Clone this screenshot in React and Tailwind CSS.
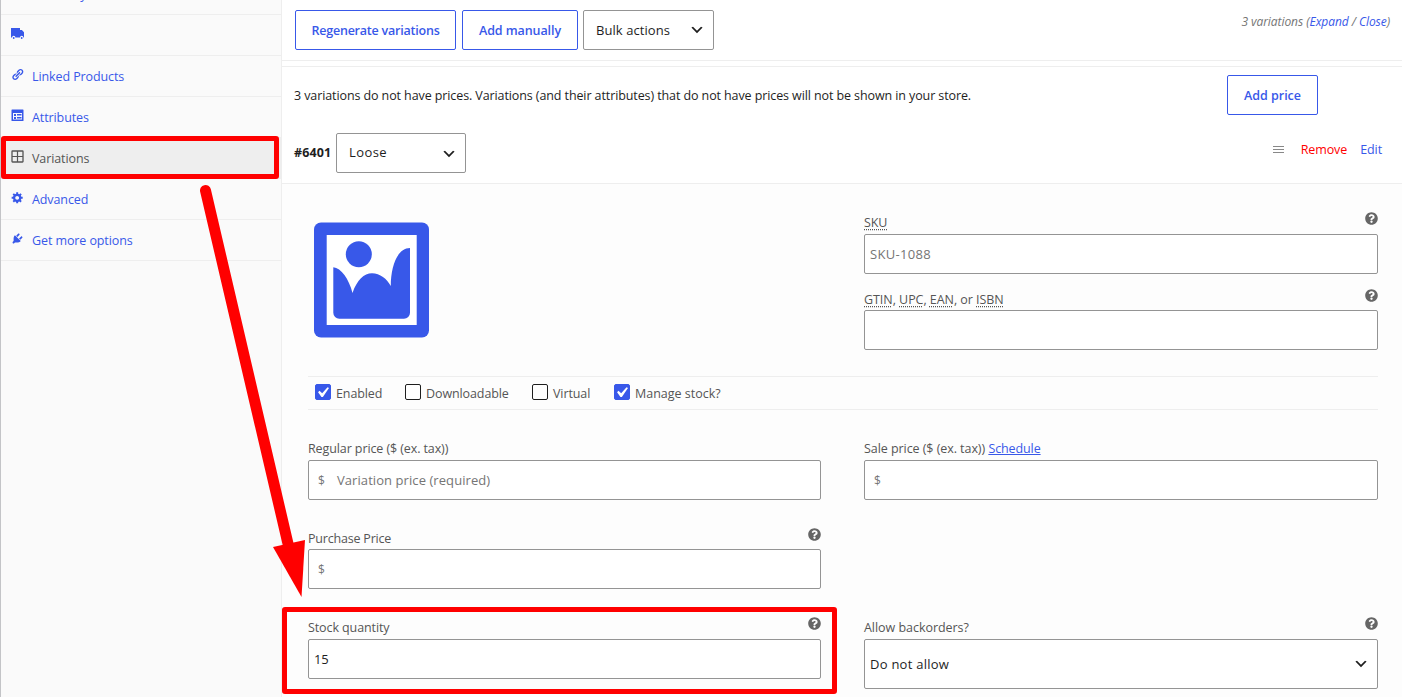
import { FaQuestionCircle } from "react-icons/fa";

const T = ({ c = "tracking-[-0.1px]", children }) => <span className={`whitespace-nowrap ${c}`}>{children}</span>;

const Glyph = ({ d, size = 13 }) => (
  <svg width={size} height={size} viewBox="0 0 20 20" fill="currentColor"><path d={d} /></svg>
);

const LINK = "M17.74 2.76c1.68 1.69 1.68 4.41 0 6.1l-1.53 1.52c-1.12 1.12-2.7 1.47-4.14 1.09l2.62-2.61.76-.77.76-.76c.84-.84.84-2.2 0-3.04-.84-.85-2.2-.85-3.04 0l-.77.76-3.38 3.38c-.37-1.44-.02-3.02 1.1-4.14l1.52-1.53c1.69-1.68 4.42-1.68 6.1 0zM8.59 13.43l5.34-5.34c.42-.42.42-1.1 0-1.52-.44-.43-1.13-.39-1.53 0l-5.33 5.34c-.42.42-.42 1.1 0 1.52.44.43 1.13.39 1.52 0zm-.76 2.29l4.14-4.15c.38 1.44.03 3.02-1.09 4.14l-1.52 1.53c-1.69 1.68-4.41 1.68-6.1 0-1.68-1.68-1.68-4.42 0-6.1l1.53-1.52c1.12-1.12 2.7-1.47 4.14-1.1l-4.14 4.15c-.85.84-.85 2.2 0 3.05.84.84 2.2.84 3.04 0z";
const GEAR = "M18 12h-2.18c-.17.7-.44 1.35-.81 1.93l1.54 1.54-2.1 2.1-1.54-1.54c-.58.36-1.23.63-1.91.79V19H8v-2.18c-.68-.16-1.33-.43-1.91-.79l-1.54 1.54-2.12-2.12 1.54-1.54c-.36-.58-.63-1.23-.79-1.91H1V9.03h2.17c.16-.7.44-1.35.8-1.94L2.43 5.55l2.1-2.1 1.54 1.54c.58-.37 1.24-.64 1.93-.81V2h3v2.18c.68.16 1.33.43 1.91.79l1.54-1.54 2.12 2.12-1.54 1.54c.36.59.64 1.24.8 1.94H18V12zm-8.5 1.5c1.66 0 3-1.34 3-3s-1.34-3-3-3-3 1.34-3 3 1.34 3 3 3z";
const PLUG = "M13.11 4.36L9.87 7.6 8 5.73l3.24-3.24c.35-.34 1.05-.2 1.56.32.52.51.66 1.21.31 1.55zm-8 1.77l.91-1.12 9.01 9.01-1.19.84c-.71.71-2.63 1.16-3.82 1.16H6.14L4.9 17.26c-.59.59-1.54.59-2.12 0-.59-.58-.59-1.53 0-2.12l1.24-1.24v-3.88c0-1.13.4-3.19 1.09-3.89zm7.26 3.97l3.24-3.24c.34-.35 1.04-.21 1.55.31.52.51.66 1.21.31 1.55l-3.24 3.25z";
const CHECK = "M14.83 4.89l1.34.94-5.81 8.38H9.02L5.78 9.67l1.34-1.25 2.57 2.4z";
const CHEVRON = "M5 6l5 5 5-5 2 1-7 7-7-7 2-1z";

const Truck = () => (
  <svg width="13" height="13" viewBox="0 0 13 13" fill="currentColor">
    <path d="M0 1h9v2h1.9L13 5.2V10.5h-0.6a1.7 1.7 0 0 0-3.4 0H4.4a1.7 1.7 0 0 0-3.4 0H0z" />
    <circle cx="2.7" cy="11" r="0.9" /><circle cx="10.7" cy="11" r="0.9" />
  </svg>
);
const Card = () => (
  <svg width="13" height="13" viewBox="0 0 13 13">
    <rect x="0.5" y="0.5" width="12" height="11.5" rx="0.6" fill="currentColor" />
    <path d="M2 4h9v6.5H2z" fill="#fafafa" />
    <path d="M3 5h2v2H3zM3 8h2v2H3zM6 5h4.5v1.4H6zM6 8h4.5v1.4H6z" fill="currentColor" />
  </svg>
);
const Grid = () => (
  <svg width="13" height="13" viewBox="0 0 13 13" fill="none" stroke="currentColor">
    <rect x="1" y="1" width="11" height="11" rx="0.5" strokeWidth="1.3" />
    <path d="M6.5 1v11M1 6.5h11" strokeWidth="1.2" />
  </svg>
);

const NavItem = ({ icon, label, active }) => (
  <div className={`flex h-[41px] shrink-0 items-center border-b border-[#eee] pl-[10px] ${active ? "bg-[#eee] text-[#555]" : "text-[#3858e9]"}`}>
    <span className="mr-[8px] flex w-[13px] pb-[4px]">{icon}</span>
    {label && <span className="pt-[2px]"><T>{label}</T></span>}
  </div>
);

const Button = ({ children, c, t }) => (
  <button className={`flex h-[40px] items-center justify-center rounded-[2px] border border-[#3858e9] bg-white pt-[2px] font-semibold text-[#3858e9] ${c}`}>
    <T c={t}>{children}</T>
  </button>
);

const Select = ({ children, c, t = "tracking-[0.07px]", arrow = "" }) => (
  <div className={`flex items-center justify-between rounded-[2px] border border-[#949494] bg-white pr-[8px] text-[13px] text-[#1e1e1e] ${c}`}>
    <T c={t}>{children}</T>
    <span className={`flex ${arrow}`}><Glyph d={CHEVRON} size={16} /></span>
  </div>
);

const Field = ({ label, help, gap = "pt-[27px]", h = "h-[23px]", children }) => (
  <div className={gap}>
    <div className={`flex items-center justify-between ${h}`}>
      <div>{label}</div>
      {help && <FaQuestionCircle className="-mt-[8px] text-[#666]" size={13} />}
    </div>
    {children}
  </div>
);

const Box = ({ children, c = "text-[#757575]" }) => (
  <div className={`flex h-[40px] items-center rounded-[2px] border border-[#949494] bg-white ${c}`}>{children}</div>
);

const Check = ({ on, label, c = "", t }) => (
  <label className={`flex h-[32px] items-start pt-[7px] ${c}`}>
    <span className={`mr-[5px] flex size-[16px] items-center justify-center rounded-[2px] border ${on ? "border-[#3858e9] bg-[#3858e9] text-white" : "border-[#1e1e1e] bg-white"}`}>
      {on && <span className="-m-[3px] flex shrink-0 pr-[2px]"><Glyph d={CHECK} size={21} /></span>}
    </span>
    <span className="pt-[1px]"><T c={t}>{label}</T></span>
  </label>
);

const Abbr = ({ children }) => <abbr className="underline decoration-dotted underline-offset-2">{children}</abbr>;
const Dollar = ({ c = "" }) => <span className={`pt-[1px] text-[12px] ${c}`}>$</span>;

const Placeholder = () => (
  <svg width="115" height="116" viewBox="0 0 115 116" fill="#3858e9">
    <rect y="0.5" width="115" height="115" rx="7" />
    <rect x="12.7" y="13" width="90" height="90" fill="#fff" />
    <circle cx="44.8" cy="32.2" r="13" />
    <path d="M19.3 45.3C27 46 35 57 38.5 71C43 58 50 51.3 58 51.3C66 51.3 73 57 76.8 64C76.8 45 83 26 96 26V90.7a6 6 0 0 1-6 6H25.3a6 6 0 0 1-6-6z" />
  </svg>
);

export default function App() {
  return (
    <div className="relative flex h-[697px] w-[1402px] overflow-hidden bg-white font-['Open_Sans',sans-serif] text-[12.5px] leading-[18px] text-[#555]">
      <nav className="w-[282px] shrink-0 border-r border-l border-r-[#eee] border-l-[#c3c4c7] bg-[#fafafa]">
        <div className="flex h-[15px] flex-col justify-end overflow-hidden">
          <NavItem label="Inventory" />
        </div>
        <NavItem icon={<Truck />} />
        <NavItem label="Linked Products" icon={<Glyph d={LINK} />} />
        <NavItem label="Attributes" icon={<Card />} />
        <NavItem label="Variations" icon={<Grid />} active />
        <NavItem label="Advanced" icon={<Glyph d={GEAR} />} />
        <NavItem label="Get more options" icon={<Glyph d={PLUG} />} />
      </nav>

      <main className="flex min-w-0 flex-1 flex-col">
        <div className="flex h-[61px] items-start border-b border-[#eee] pt-[10px] pr-[12px] pl-[13px]">
          <Button c="w-[161px]" t="tracking-[-0.22px]">Regenerate variations</Button>
          <Button c="ml-[6px] w-[116px]" t="tracking-[-0.08px]">Add manually</Button>
          <Select c="ml-[5px] h-[40px] w-[131px] pl-[12px]">Bulk actions</Select>
          <div className="ml-auto pt-[3px] text-[12px] text-[#757575] italic">
            <T c="tracking-[-0.06px]">3 variations (<a className="text-[#3858e9]">Expand</a> / <a className="text-[#3858e9]">Close</a>)</T>
          </div>
        </div>
        <div className="mt-[5px] flex h-[57px] items-center justify-between border-t border-[#eee] pr-[84px] pl-[12px] text-[#1e1e1e]">
          <span className="pt-[2px]">
            <T>3 variations do not have prices. Variations (and their attributes) that do not have prices will not be shown in your store.</T>
          </span>
          <Button c="w-[91px]" t="tracking-[-0.02px]">Add price</Button>
        </div>
        <div className="flex h-[61px] items-center border-b border-[#eee] pr-[20px] pl-[12px]">
          <strong className="w-[42px] text-[#1e1e1e]"><T c="tracking-[0.15px]">#6401</T></strong>
          <Select c="h-[40px] w-[130px] pb-[2px] pl-[12px]" t="tracking-[0.4px]" arrow="pt-[3px]">Loose</Select>
          <div className="ml-auto flex items-center pb-[7px]">
            <svg width="11" height="9" stroke="#888"><path d="M0 1.5h11M0 4.5h11M0 7.5h11" /></svg>
            <a className="ml-[17px] text-[#f00]"><T>Remove</T></a>
            <a className="ml-[13px] text-[#3858e9]"><T>Edit</T></a>
          </div>
        </div>

        <div className="flex flex-1 flex-col bg-[#fdfdfd] pr-[24px] pl-[26px]">
          <div className="grid h-[192px] shrink-0 grid-cols-[513px_514px] gap-x-[43px]">
            <div className="pt-[38px] pl-[6px]"><Placeholder /></div>
            <div>
              <Field help label={<T><Abbr>SKU</Abbr></T>}>
                <Box c="pl-[5px] text-[13px] text-[#757575]"><T c="tracking-[0.3px]">SKU-1088</T></Box>
              </Field>
              <Field help gap="pt-[15px]" h="h-[21px]" label={<T c="tracking-[-0.05px]"><Abbr>GTIN</Abbr>, <Abbr>UPC</Abbr>, <Abbr>EAN</Abbr>, or <Abbr>ISBN</Abbr></T>}>
                <Box />
              </Field>
            </div>
          </div>

          <div className="flex h-[34px] shrink-0 items-center border-y border-[#eee] pl-[7px]">
            <Check on label="Enabled" c="w-[90px]" />
            <Check label="Downloadable" c="w-[127px]" />
            <Check label="Virtual" c="w-[82px]" />
            <Check on label="Manage stock?" t="tracking-[0px]" />
          </div>

          <div className="grid grid-cols-[513px_514px] gap-x-[43px]">
            <Field label={<T>Regular price ($ (ex. tax))</T>}>
              <Box c="pl-[9px] text-[#757575]"><Dollar c="w-[19px]" /><T c="text-[13px] tracking-[0.07px]">Variation price (required)</T></Box>
            </Field>
            <Field label={<><T c="tracking-[-0.06px]">Sale price ($ (ex. tax))</T> <a className="text-[#3858e9] underline underline-offset-1"><T>Schedule</T></a></>}>
              <Box c="pl-[9px] text-[#757575]"><Dollar /></Box>
            </Field>
            <Field help gap="pt-[28px]" h="h-[21px]" label={<T c="tracking-[-0.2px]">Purchase Price</T>}>
              <Box c="pl-[9px] text-[#757575]"><Dollar /></Box>
            </Field>
            <div />
            <Field help label={<T>Stock quantity</T>}>
              <Box c="pl-[5px] text-[13px] text-[#1e1e1e]"><T>15</T></Box>
            </Field>
            <Field help label={<T c="tracking-[-0.04px]">Allow backorders?</T>}>
              <Select c="h-[50px] pl-[5px]" t="tracking-[0.25px]">Do not allow</Select>
            </Field>
          </div>
        </div>
      </main>

      <div className="absolute top-[136px] left-[1px] h-[43px] w-[278px] rounded-[3px] border-[5px] border-[#f00]" />
      <div className="absolute top-[607px] left-[282px] h-[87px] w-[555px] rounded-[3px] border-[5px] border-[#f00]" />
      <svg className="absolute top-0 left-0" width="320" height="620">
        <path d="M205.5 190.5L289 548" stroke="#f00" strokeWidth="11" strokeLinecap="round" />
        <path d="M273 547L305 540L301.5 597z" fill="#f00" />
      </svg>
    </div>
  );
}
